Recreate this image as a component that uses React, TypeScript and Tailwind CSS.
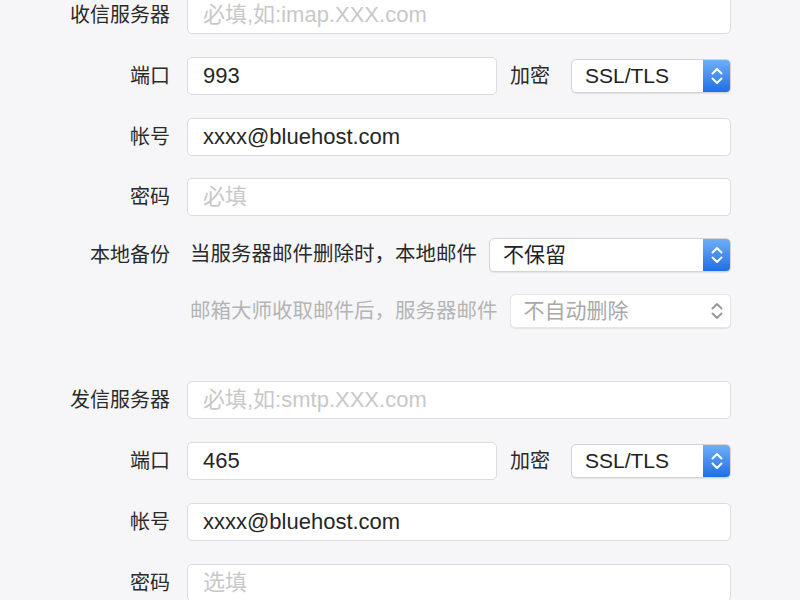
import React from "react";

const font = { fontFamily: '"Liberation Sans", "Noto Sans CJK SC", sans-serif' };

function Chevrons({ color }: { color: string }) {
  return (
    <svg width="14" height="24" viewBox="0 0 14 24" fill="none">
      <path d="M2.5 9.5 L7 5 L11.5 9.5" stroke={color} strokeWidth="2" strokeLinecap="round" strokeLinejoin="round" />
      <path d="M2.5 14.5 L7 19 L11.5 14.5" stroke={color} strokeWidth="2" strokeLinecap="round" strokeLinejoin="round" />
    </svg>
  );
}

function Field({ value, placeholder, className = "" }: { value?: string; placeholder?: string; className?: string }) {
  return (
    <div
      className={`h-[38px] flex items-center rounded-[5px] border border-[#dcdcdc] bg-white px-[15px] text-[22px] ${className}`}
    >
      {value ? (
        <span className="text-[#262626]">{value}</span>
      ) : (
        <span className="text-[#c8c8c8]">{placeholder}</span>
      )}
    </div>
  );
}

function Select({ value, disabled = false, className = "" }: { value: string; disabled?: boolean; className?: string }) {
  return (
    <div
      className={`h-[34px] flex items-stretch rounded-[5px] border bg-white shadow-[0_1px_1px_rgba(0,0,0,0.08)] overflow-hidden ${
        disabled ? "border-[#e6e6e6]" : "border-[#d4d4d4]"
      } ${className}`}
    >
      <div
        className={`flex-1 flex items-center pl-[13px] text-[21px] ${
          disabled ? "text-[#a8a8a8]" : "text-[#222]"
        }`}
      >
        {value}
      </div>
      {disabled ? (
        <div className="w-[27px] flex items-center justify-center">
          <Chevrons color="#9a9a9a" />
        </div>
      ) : (
        <div className="w-[27px] flex items-center justify-center bg-gradient-to-b from-[#6eaef9] to-[#1c6fe4]">
          <Chevrons color="#ffffff" />
        </div>
      )}
    </div>
  );
}

function Row({ label, h, children }: { label?: string; h: string; children: React.ReactNode }) {
  return (
    <div className={`flex items-center ${h}`}>
      <div className="w-[170px] shrink-0 text-right text-[20px] text-[#2a2a2a]">{label}</div>
      <div className="ml-[17px] w-[544px] flex items-center">{children}</div>
    </div>
  );
}

function PortRow({ port }: { port: string }) {
  return (
    <Row label="端口" h="h-[61px]">
      <Field value={port} className="w-[310px]" />
      <span className="ml-[13px] text-[20px] text-[#2a2a2a]">加密</span>
      <Select value="SSL/TLS" className="ml-[21px] w-[160px]" />
    </Row>
  );
}

export default function App() {
  return (
    <div className="w-[800px] h-[600px] overflow-hidden bg-[#f6f6f8]" style={font}>
      <div className="mt-[-16px] flex flex-col">
        <Row label="收信服务器" h="h-[61px]">
          <Field placeholder="必填,如:imap.XXX.com" className="w-full" />
        </Row>
        <PortRow port="993" />
        <Row label="帐号" h="h-[61px]">
          <Field value="xxxx@bluehost.com" className="w-full" />
        </Row>
        <Row label="密码" h="h-[59px]">
          <Field placeholder="必填" className="w-full" />
        </Row>
        <Row label="本地备份" h="h-[57px]">
          <span className="ml-[3px] text-[20.5px] text-[#2a2a2a] whitespace-nowrap">当服务器邮件删除时，本地邮件</span>
          <Select value="不保留" className="ml-[12px] flex-1" />
        </Row>
        <Row h="h-[56px]">
          <span className="ml-[3px] text-[20.5px] text-[#b4b4b4] whitespace-nowrap">邮箱大师收取邮件后，服务器邮件</span>
          <Select value="不自动删除" disabled className="ml-[12px] flex-1" />
        </Row>
        <div className="h-[30px]" />
        <Row label="发信服务器" h="h-[61px]">
          <Field placeholder="必填,如:smtp.XXX.com" className="w-full" />
        </Row>
        <PortRow port="465" />
        <Row label="帐号" h="h-[61px]">
          <Field value="xxxx@bluehost.com" className="w-full" />
        </Row>
        <Row label="密码" h="h-[61px]">
          <Field placeholder="选填" className="w-full" />
        </Row>
      </div>
    </div>
  );
}
